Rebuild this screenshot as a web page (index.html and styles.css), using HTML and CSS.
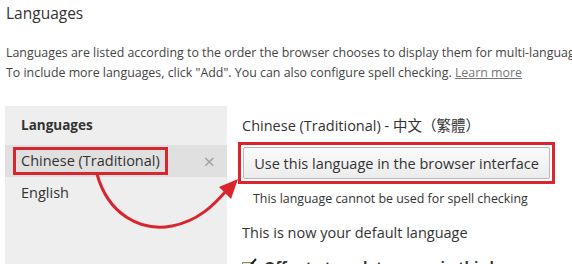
FILE: index.html
```html
<!DOCTYPE html>
<html lang="en">
<head>
  <meta charset="UTF-8">
  <title>Languages</title>
  <link rel="stylesheet" href="styles.css">
</head>
<body>
  <div class="page">
    <h1 class="page-title">Languages</h1>
    <p class="intro">
      Languages are listed according to the order the browser chooses to display them for multi-language websites.<br>
      To include more languages, click "Add". You can also configure spell checking. <a href="#" class="learn-more">Learn more</a>
    </p>

    <div class="lang-area">
      <!-- Language list -->
      <div class="lang-list">
        <div class="list-header">Languages</div>
        <div class="lang-row selected">
          <span class="lang-name marked">Chinese (Traditional)</span>
          <span class="remove">&times;</span>
        </div>
        <div class="lang-row">
          <span class="lang-name">English</span>
        </div>
      </div>

      <!-- Language details -->
      <div class="lang-detail">
        <div class="detail-title">Chinese (Traditional) - 中文（繁體）</div>
        <div class="marked-btn">
          <button class="ui-btn">Use this language in the browser interface</button>
        </div>
        <div class="note">This language cannot be used for spell checking</div>
        <div class="default-msg">This is now your default language</div>
        <div class="offer">
          <span class="check-icon">
            <svg width="16" height="14" viewBox="0 0 16 14">
              <rect x="0.5" y="4.5" width="11" height="9" fill="#e8e6c8" stroke="#8a8a6a"/>
              <path d="M2 8 L5 11 L14 1" fill="none" stroke="#222" stroke-width="2"/>
            </svg>
          </span>
          <span class="offer-text">Offer to translate pages in this language</span>
        </div>
      </div>
    </div>
  </div>

  <!-- annotation arrow -->
  <svg class="arrow" width="572" height="264" viewBox="0 0 572 264">
    <path d="M97 174 C 108 214, 140 232, 172 226 C 198 221, 214 205, 226 191" fill="none" stroke="#d9262e" stroke-width="3"/>
    <polygon points="238,179 219,187 231,199" fill="#d9262e"/>
  </svg>
</body>
</html>
```

FILE: styles.css
```css
/* Base */
body {
  margin: 0;
  font-family: "Open Sans", "Noto Sans CJK TC", sans-serif;
  color: #444;
  background: #fff;
  overflow: hidden;
}

.page {
  padding: 2px 0 0 6px;
  width: 900px;
}

.page-title {
  margin: 0;
  font-size: 15.5px;
  font-weight: normal;
  color: #333;
  line-height: 22px;
}

.intro {
  margin: 19px 0 0;
  font-size: 12.4px;
  line-height: 20px;
  color: #444;
  white-space: nowrap;
}

.learn-more {
  color: #777;
  text-decoration: underline;
}

/* Two columns */
.lang-area {
  display: flex;
  margin-top: 23px;
  margin-left: -1px;
}

.lang-list {
  width: 222px;
  height: 158px;
  background: #eeeeee;
}

.list-header {
  padding: 10px 0 0 16px;
  font-size: 13.5px;
  font-weight: bold;
  color: #333;
  height: 29px;
}

.lang-row {
  display: flex;
  align-items: center;
  justify-content: space-between;
  height: 32px;
  padding: 0 12px 0 8px;
  font-size: 14.5px;
  color: #333;
}

.lang-row.selected {
  background: #e0e0e0;
}

.lang-name {
  padding: 0 5px;
  border: 3px solid transparent;
  line-height: 22px;
}

.lang-name.marked {
  border-color: #d9262e;
}

.remove {
  color: #a0a0a0;
  font-size: 20px;
}

/* Detail pane */
.lang-detail {
  padding: 10px 0 0 15px;
  font-size: 14.5px;
  color: #333;
}

.detail-title {
  line-height: 20px;
}

.marked-btn {
  display: inline-block;
  margin: 6px 0 0 -4px;
  padding: 2px;
  border: 3px solid #d9262e;
}

.ui-btn {
  display: block;
  width: 307px;
  height: 32px;
  font-family: inherit;
  font-size: 14.5px;
  color: #333;
  background: linear-gradient(#fafafa, #ececec);
  border: 1px solid #b8b8b8;
  border-radius: 2px;
}

.note {
  margin: 6px 0 0 11px;
  font-size: 12.4px;
  line-height: 18px;
}

.default-msg {
  margin-top: 15px;
  line-height: 20px;
}

.offer {
  display: flex;
  align-items: center;
  gap: 6px;
  margin-top: 14px;
}

.offer-text {
  font-weight: bold;
}

.arrow {
  position: absolute;
  left: 0;
  top: 0;
  pointer-events: none;
}
```
